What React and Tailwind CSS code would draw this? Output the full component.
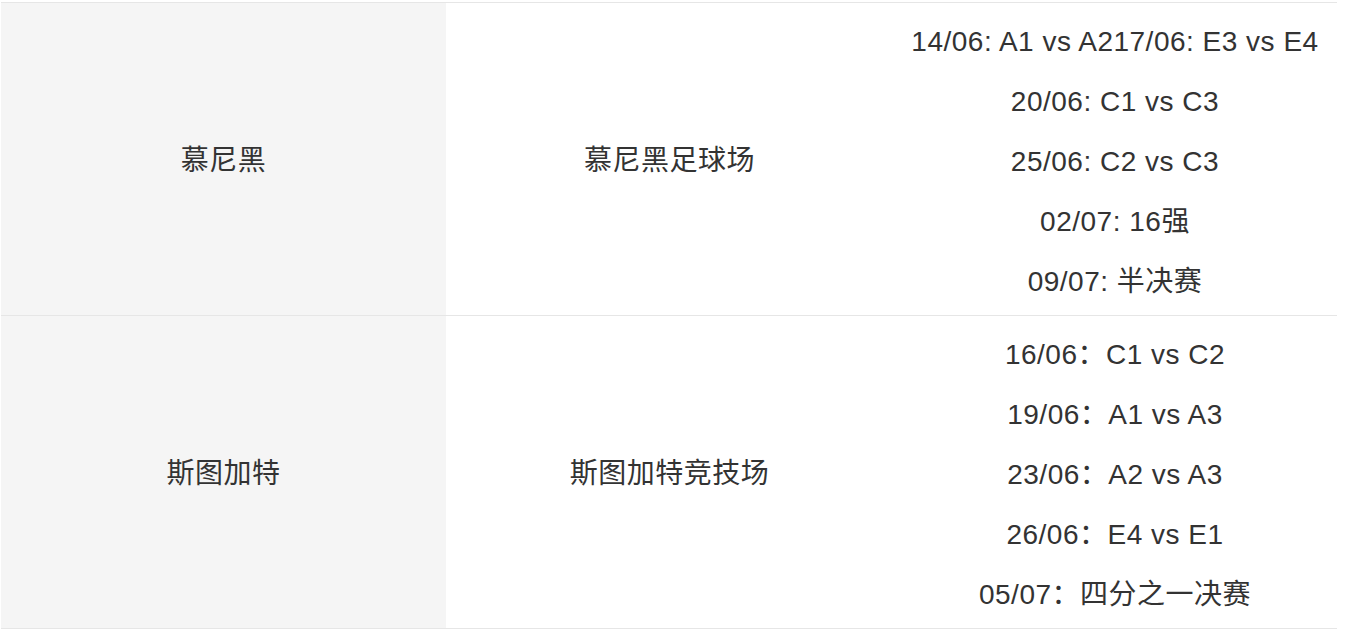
const ROWS = [
  {
    city: "慕尼黑",
    stadium: "慕尼黑足球场",
    matches: ["14/06: A1 vs A217/06: E3 vs E4", "20/06: C1 vs C3", "25/06: C2 vs C3", "02/07: 16强", "09/07: 半决赛"],
  },
  {
    city: "斯图加特",
    stadium: "斯图加特竞技场",
    matches: ["16/06：C1 vs C2", "19/06：A1 vs A3", "23/06：A2 vs A3", "26/06：E4 vs E1", "05/07：四分之一决赛"],
  },
];

export default function App() {
  return (
    <div className="min-h-[630px] bg-white pt-[2px] pl-[1px] font-['Liberation_Sans','Noto_Sans_CJK_SC',sans-serif] text-[28px] tracking-[0.5px] text-[#333333]">
      <div className="w-[1336px] border-b border-[#e6e6e6]">
        {ROWS.map((row) => (
          <div key={row.city} className="grid h-[313px] grid-cols-[445px_447px_444px] border-t border-[#e6e6e6]">
            <div className="flex items-center justify-center bg-[#f5f5f5] pt-[4px]">{row.city}</div>
            <div className="flex items-center justify-center pt-[4px]">{row.stadium}</div>
            <div className="flex flex-col items-center justify-center pt-[9px] pb-[3px]">
              {row.matches.map((m) => (
                <p key={m} className="whitespace-nowrap leading-[60px]">
                  {m}
                </p>
              ))}
            </div>
          </div>
        ))}
      </div>
    </div>
  );
}
